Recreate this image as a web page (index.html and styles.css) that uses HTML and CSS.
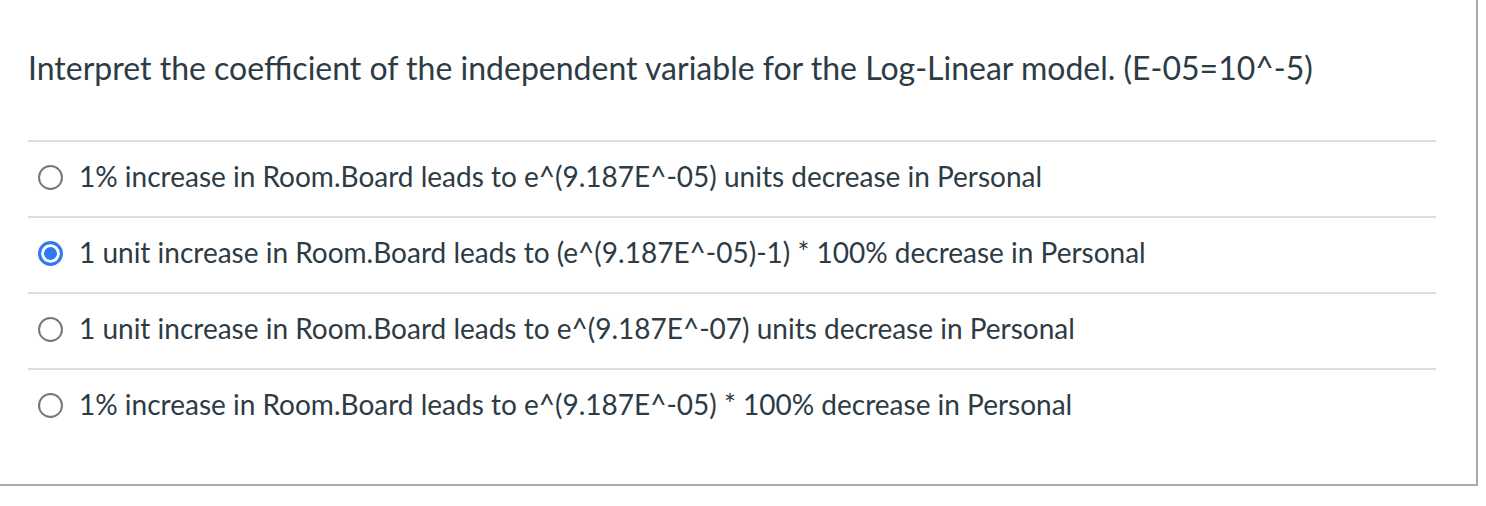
FILE: index.html
```html
<!DOCTYPE html>
<html>
<head>
<meta charset="utf-8">
<link rel="stylesheet" href="styles.css">
</head>
<body>
<div class="question">
  <div class="question-text">Interpret the coefficient of the independent variable for the Log-Linear model. (E-05=10^-5)</div>
  <div class="answers">
    <label class="answer"><span class="radio"></span><span class="answer-text">1% increase in Room.Board leads to e^(9.187E^-05) units decrease in Personal</span></label>
    <label class="answer"><span class="radio checked"></span><span class="answer-text">1 unit increase in Room.Board leads to (e^(9.187E^-05)-1) * 100% decrease in Personal</span></label>
    <label class="answer"><span class="radio"></span><span class="answer-text">1 unit increase in Room.Board leads to e^(9.187E^-07) units decrease in Personal</span></label>
    <label class="answer"><span class="radio"></span><span class="answer-text">1% increase in Room.Board leads to e^(9.187E^-05) * 100% decrease in Personal</span></label>
  </div>
</div>
</body>
</html>
```
FILE: styles.css
```css
html, body {
  margin: 0;
  padding: 0;
  background: #fff;
}
body {
  font-family: Lato, "Open Sans", sans-serif;
  color: #2d3b45;
}
.question {
  border-right: 2px solid #aaaaaa;
  border-bottom: 2px solid #aaaaaa;
  padding: 48px 40px 0 28px;
  box-sizing: content-box;
  width: 1408px;
  height: 436px;
}
.question-text {
  font-size: 32px;
  line-height: 40px;
  margin-bottom: 52px;
}
.answers {
  display: flex;
  flex-direction: column;
}
.answer {
  display: flex;
  align-items: center;
  gap: 16px;
  height: 76px;
  box-sizing: border-box;
  border-top: 2px solid #dddddd;
  padding-left: 10px;
  padding-bottom: 6px;
  font-size: 28px;
}
.radio {
  width: 21px;
  height: 21px;
  border: 2px solid #777;
  border-radius: 50%;
  flex: none;
  box-sizing: content-box;
  margin-top: 2px;
}
.radio.checked {
  border: 3px solid #2f7bf5;
  width: 19px;
  height: 19px;
  background: #2f7bf5;
  box-shadow: inset 0 0 0 3px #fff;
}
```
